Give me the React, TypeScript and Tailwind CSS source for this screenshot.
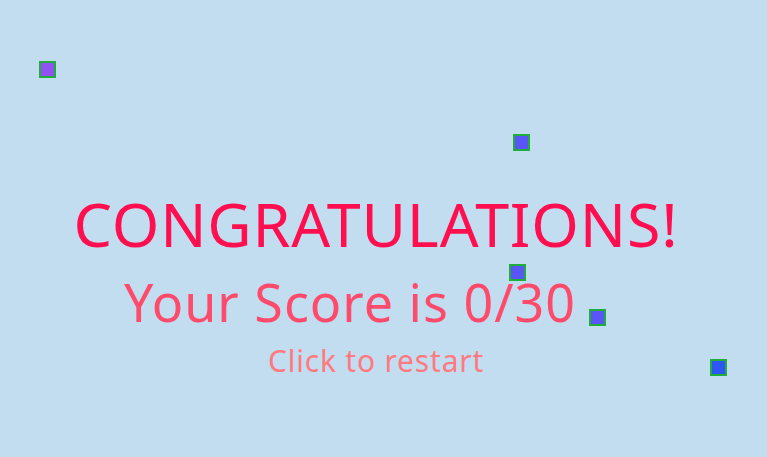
const squares = [
  { left: 39, top: 61, fill: "bg-[#9052f2]" },
  { left: 513, top: 134, fill: "bg-[#5a55f6]" },
  { left: 509, top: 264, fill: "bg-[#5a55f6]" },
  { left: 589, top: 309, fill: "bg-[#5a55f6]" },
  { left: 710, top: 359, fill: "bg-[#2e55f6]" },
];

export default function App() {
  return (
    <div className="relative h-[457px] w-[767px] overflow-hidden bg-[#c2ddef] font-['Noto_Sans',sans-serif]">
      <div className="flex w-[752px] flex-col items-center pt-[193px]">
        <div className="text-[61px] leading-[61px] tracking-[0.8px] text-[#ff0f50]">CONGRATULATIONS!</div>
        <div className="mt-[22px] pr-[52px] text-[52px] leading-[52px] tracking-[1px] text-[#ff4b6b]">Your Score is 0/30</div>
        <div className="mt-[18px] text-[30px] leading-[30px] tracking-[0.8px] text-[#ff7a80]">Click to restart</div>
      </div>
      {squares.map((s, i) => (
        <div
          key={i}
          className={`absolute h-[17px] w-[17px] border-2 border-[#1fae3c] ${s.fill}`}
          style={{ left: s.left, top: s.top }}
        />
      ))}
    </div>
  );
}
